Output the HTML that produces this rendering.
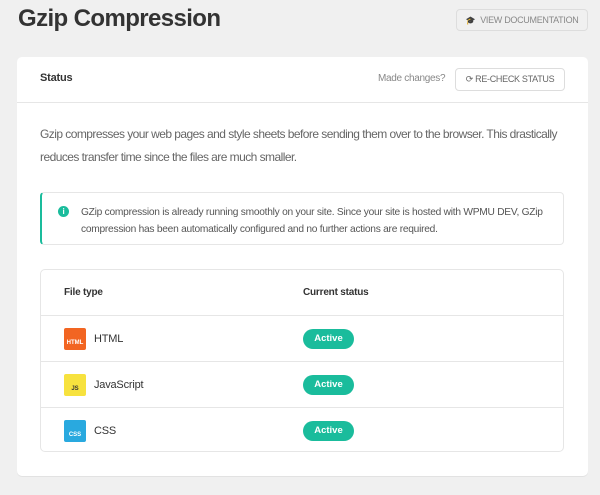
<!DOCTYPE html>
<html><head><style>
*{box-sizing:border-box;margin:0;padding:0}
body{width:600px;height:495px;background:#f0f0f0;font-family:"Liberation Sans",sans-serif;color:#333;position:relative;overflow:hidden}
.abs{position:absolute}
h1{position:absolute;left:18px;top:5px;font-size:24px;font-weight:bold;color:#333;letter-spacing:-0.6px}
.btn{position:absolute;border:1px solid #ddd;border-radius:4px;font-size:9px;color:#888;display:flex;align-items:center;justify-content:center;gap:5px;background:transparent;letter-spacing:-0.3px}
.card{position:absolute;left:17px;top:57px;width:571px;height:419px;background:#fff;border-radius:5px;box-shadow:0 1px 0 #e2e2e2}
.hdr{height:46px;border-bottom:1px solid #e6e6e6}
.p{position:absolute;left:23px;top:66px;width:545px;font-size:12px;line-height:23px;color:#666;letter-spacing:-0.55px;white-space:nowrap}
.note{position:absolute;left:23px;top:135px;width:524px;height:53px;border:1px solid #e6e6e6;border-left:2px solid #1abc9c;border-radius:4px;font-size:10.2px;line-height:17px;color:#555;padding:11px 0 0 39px;letter-spacing:-0.25px}
.note .i{position:absolute;left:16px;top:13px;width:11px;height:11px;border-radius:50%;background:#1abc9c;color:#fff;font-size:8px;font-weight:bold;text-align:center;line-height:11px}
.tbl{position:absolute;left:23px;top:212px;width:524px;height:183px;border:1px solid #e6e6e6;border-radius:5px}
.row{position:absolute;left:0;width:522px;height:46px;border-top:1px solid #e6e6e6}
.th{position:absolute;top:17px;font-size:10px;font-weight:bold;color:#333;letter-spacing:-0.2px}
.ic{position:absolute;left:23px;top:12px;width:22px;height:22px;border-radius:2px;font-size:6px;color:#fff;text-align:center;padding-top:12px;font-weight:bold}
.nm{position:absolute;left:53px;top:17px;font-size:11px;color:#333;letter-spacing:-0.2px}
.pill{position:absolute;left:262px;top:13px;width:51px;height:20px;border-radius:10px;background:#1abc9c;color:#fff;font-size:9.5px;font-weight:bold;text-align:center;line-height:20px}
</style></head><body>
<h1>Gzip Compression</h1>
<div class="btn" style="left:456px;top:9px;width:132px;height:22px"><span style="font-size:8px">🎓</span>VIEW DOCUMENTATION</div>
<div class="card">
<div class="hdr"></div>
<div class="abs" style="left:23px;top:15px;font-size:11px;font-weight:bold;letter-spacing:-0.2px">Status</div>
<div class="abs" style="left:361px;top:16px;font-size:10px;color:#888;letter-spacing:-0.3px">Made changes?</div>
<div class="btn" style="left:438px;top:11px;width:110px;height:23px;color:#666">⟳ RE-CHECK STATUS</div>
<div class="p">Gzip compresses your web pages and style sheets before sending them over to the browser. This drastically<br>reduces transfer time since the files are much smaller.</div>
<div class="note"><span class="i">i</span>GZip compression is already running smoothly on your site. Since your site is hosted with WPMU DEV, GZip<br>compression has been automatically configured and no further actions are required.</div>
<div class="tbl">
<div class="th" style="left:23px">File type</div>
<div class="th" style="left:262px">Current status</div>
<div class="row" style="top:45px"><div class="ic" style="background:#f26522">HTML</div><div class="nm">HTML</div><div class="pill">Active</div></div>
<div class="row" style="top:91px"><div class="ic" style="background:#f7e23e;color:#333">JS</div><div class="nm">JavaScript</div><div class="pill">Active</div></div>
<div class="row" style="top:137px"><div class="ic" style="background:#29a9df">CSS</div><div class="nm">CSS</div><div class="pill">Active</div></div>
</div>
</div>
</body></html>
